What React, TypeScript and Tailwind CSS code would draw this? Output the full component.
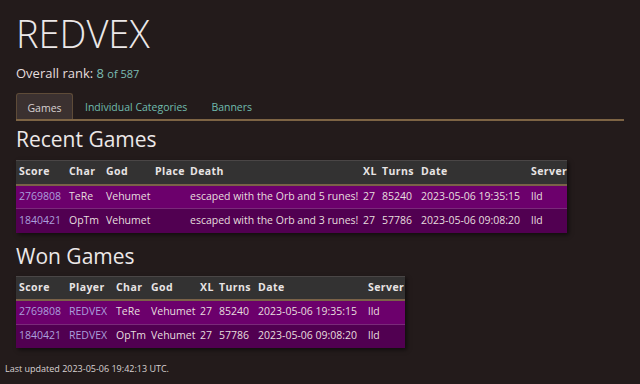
const recent = [
  { score: '2769808', char: 'TeRe', god: 'Vehumet', place: '', death: 'escaped with the Orb and 5 runes!', xl: '27', turns: '85240', date: '2023-05-06 19:35:15', server: 'lld' },
  { score: '1840421', char: 'OpTm', god: 'Vehumet', place: '', death: 'escaped with the Orb and 3 runes!', xl: '27', turns: '57786', date: '2023-05-06 09:08:20', server: 'lld' },
]

const won = [
  { score: '2769808', player: 'REDVEX', char: 'TeRe', god: 'Vehumet', xl: '27', turns: '85240', date: '2023-05-06 19:35:15', server: 'lld' },
  { score: '1840421', player: 'REDVEX', char: 'OpTm', god: 'Vehumet', xl: '27', turns: '57786', date: '2023-05-06 09:08:20', server: 'lld' },
]

const th = 'px-[3px] text-left font-bold tracking-[0.04em] text-[#e8e4e4]'
const td = 'px-[3px] whitespace-nowrap'

const rowBg = (i: number) => (i === 0 ? 'bg-[#6c006c]' : 'bg-[#510051]')

const App = () => {
  return (
    <div className="w-[640px] h-[384px] overflow-hidden bg-[#231b1b] text-[#e6dede] font-['Open_Sans',sans-serif]">
      <div className="px-4 pt-[8px]">
        <h1 className="text-[38px] leading-[50px] font-light text-[#ece8e8]">REDVEX</h1>
        <div className="mt-[6px] text-[13px] leading-[18px]">
          Overall rank: <span className="text-[#7cbdb3]">8 <span className="text-[11px]">of 587</span></span>
        </div>
        <div className="mt-[10px] flex items-end border-b-2 border-[#7d6444] text-[10.5px]">
          <div className="h-[26px] w-[57px] pt-[4px] flex items-center justify-center bg-[#3b3130] border border-b-0 border-[#5e4b38] rounded-t-[3px] text-[#d8d2d2]">Games</div>
          <div className="h-[26px] pt-[4px] px-[12px] flex items-center text-[#70bcae]">Individual Categories</div>
          <div className="h-[26px] pt-[4px] px-[12px] flex items-center text-[#70bcae]">Banners</div>
        </div>
        <h2 className="mt-[4px] text-[21px] leading-[28px] text-[#ece8e8]">Recent Games</h2>
        <table className="mt-[7px] table-fixed border-collapse w-[551px] text-[10.5px] shadow-[2px_2px_4px_rgba(0,0,0,0.5)]">
          <colgroup>
            <col className="w-[50px]" />
            <col className="w-[37px]" />
            <col className="w-[49px]" />
            <col className="w-[35px]" />
            <col className="w-[173px]" />
            <col className="w-[19px]" />
            <col className="w-[39px]" />
            <col className="w-[110px]" />
            <col className="w-[39px]" />
          </colgroup>
          <thead>
            <tr className="h-[24px] bg-[#333232] border-t border-[#4a4646] border-b-2 border-b-[#7a6248]">
              <th className={th}>Score</th>
              <th className={th}>Char</th>
              <th className={th}>God</th>
              <th className={th}>Place</th>
              <th className={th}>Death</th>
              <th className={th}>XL</th>
              <th className={th}>Turns</th>
              <th className={th}>Date</th>
              <th className={th}>Server</th>
            </tr>
          </thead>
          <tbody>
            {recent.map((g, i) => (
              <tr key={g.score} className={`h-[24px] ${rowBg(i)} border-b border-[#7a2a7a] last:border-b-0`}>
                <td className={`${td} text-[#ab9fdc]`}>{g.score}</td>
                <td className={td}>{g.char}</td>
                <td className={td}>{g.god}</td>
                <td className={td}>{g.place}</td>
                <td className={td}>{g.death}</td>
                <td className={td}>{g.xl}</td>
                <td className={td}>{g.turns}</td>
                <td className={td}>{g.date}</td>
                <td className={td}>{g.server}</td>
              </tr>
            ))}
          </tbody>
        </table>
        <h2 className="mt-[9px] text-[21px] leading-[28px] text-[#ece8e8]">Won Games</h2>
        <table className="mt-[6px] table-fixed border-collapse w-[389px] text-[10.5px] shadow-[2px_2px_4px_rgba(0,0,0,0.5)]">
          <colgroup>
            <col className="w-[50px]" />
            <col className="w-[47px]" />
            <col className="w-[35px]" />
            <col className="w-[49px]" />
            <col className="w-[19px]" />
            <col className="w-[39px]" />
            <col className="w-[110px]" />
            <col className="w-[40px]" />
          </colgroup>
          <thead>
            <tr className="h-[24px] bg-[#333232] border-t border-[#4a4646] border-b-2 border-b-[#7a6248]">
              <th className={th}>Score</th>
              <th className={th}>Player</th>
              <th className={th}>Char</th>
              <th className={th}>God</th>
              <th className={th}>XL</th>
              <th className={th}>Turns</th>
              <th className={th}>Date</th>
              <th className={th}>Server</th>
            </tr>
          </thead>
          <tbody>
            {won.map((g, i) => (
              <tr key={g.score} className={`h-[24px] ${rowBg(i)} border-b border-[#7a2a7a] last:border-b-0`}>
                <td className={`${td} text-[#ab9fdc]`}>{g.score}</td>
                <td className={`${td} text-[#ab9fdc]`}>{g.player}</td>
                <td className={td}>{g.char}</td>
                <td className={td}>{g.god}</td>
                <td className={td}>{g.xl}</td>
                <td className={td}>{g.turns}</td>
                <td className={td}>{g.date}</td>
                <td className={td}>{g.server}</td>
              </tr>
            ))}
          </tbody>
        </table>
      </div>
      <div className="mt-[14px] px-[5px] text-[9px] leading-[13px] text-[#d8d2d2]">Last updated 2023-05-06 19:42:13 UTC.</div>
    </div>
  )
}

export default App
